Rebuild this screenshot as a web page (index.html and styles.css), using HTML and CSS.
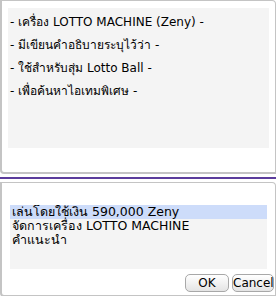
FILE: index.html
```html
<!DOCTYPE html>
<html lang="th">
  <head>
    <meta charset="UTF-8" />
    <title>Lotto Machine</title>
    <link rel="stylesheet" href="styles.css">
  </head>
  <body>
    <!-- NPC text -->
    <section class="box box-top">
      <div class="talk">
        <p>- เครื่อง LOTTO MACHINE (Zeny) -</p>
        <p>- มีเขียนคำอธิบายระบุไว้ว่า -</p>
        <p>- ใช้สำหรับสุ่ม Lotto Ball -</p>
        <p>- เพื่อค้นหาไอเทมพิเศษ -</p>
      </div>
    </section>

    <div class="divider"></div>

    <!-- Menu -->
    <section class="box box-bottom">
      <ul class="menu">
        <li class="selected">เล่นโดยใช้เงิน 590,000 Zeny</li>
        <li>จัดการเครื่อง LOTTO MACHINE</li>
        <li>คำแนะนำ</li>
      </ul>
      <div class="actions">
        <button class="btn btn-ok">OK</button>
        <button class="btn">Cancel</button>
      </div>
    </section>
  </body>
</html>
```

FILE: styles.css
```css
:root{--edge:#c4c4c4;--inner:#f4f4f4;--sel:#cddcfa;--ink:#000;--purple:#5b3c9c}
*{box-sizing:border-box;margin:0;padding:0}
body{width:276px;height:296px;background:#fff;font-family:Tahoma,"DejaVu Sans","Noto Sans",sans-serif;font-size:12px;color:var(--ink);overflow:hidden}
.box{border:2px solid var(--edge);border-top-width:1px;border-right-width:1px;border-radius:0 4px 0 4px;background:#fff}
.box-top{height:174px;padding:7px 6px 0 6px}
.talk{background:var(--inner);height:140px;padding:3px 0 0 2px}
.talk p{line-height:23px;white-space:nowrap}
.divider{height:2px;background:var(--purple);margin:3px 0 3px}
.box-bottom{height:115px;padding:22px 8px 0 8px;display:flex;flex-direction:column}
.menu{list-style:none;background:var(--inner);height:64px}
.menu li{line-height:14px;height:14px;padding-left:2px;white-space:nowrap;font-size:12.5px}
.menu li.selected{background:var(--sel)}
.actions{display:flex;justify-content:flex-end;gap:3px;margin:5px -7px 0 0}
.btn{height:18px;width:42px;padding:0;border:1px solid #a8a8a8;border-radius:5px;background:linear-gradient(#fff,#e4e4e4);font:inherit;font-size:12px;line-height:16px;color:#000}
.btn-ok{width:44px}
```
